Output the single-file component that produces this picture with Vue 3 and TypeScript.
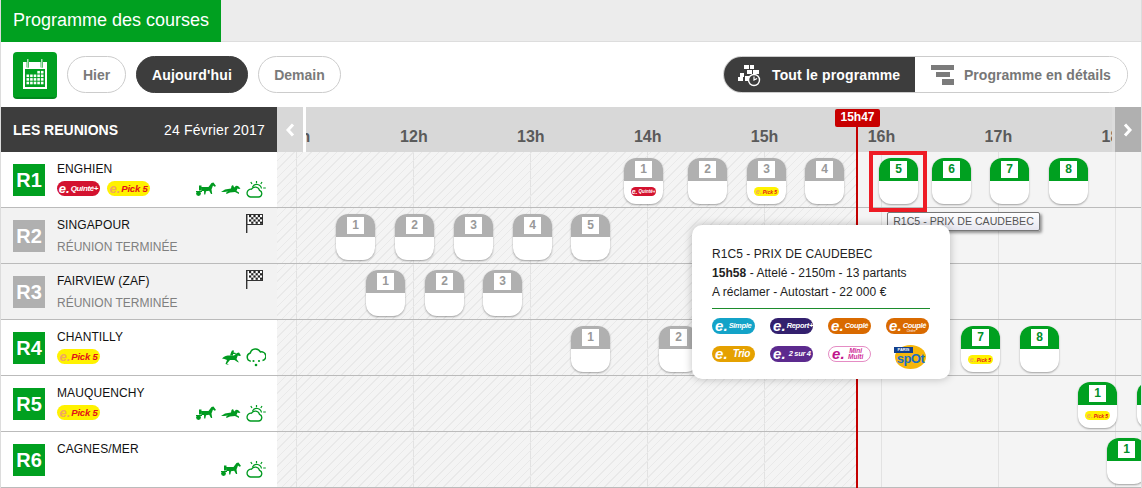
<script setup lang="ts">
interface Race { n: number; x: number; on: boolean; mini?: 'quinte' | 'pick' }
interface Meeting {
  code: string; name: string; done: boolean; pills: ('quinte' | 'pick')[];
  icons: string[]; races: Race[];
}
const hours = [11, 12, 13, 14, 15, 16, 17, 18].map((h, i) => ({ label: h + 'h', x: 20 + i * 116.9 }))
const ox = 277
const meetings: Meeting[] = [
  { code: 'R1', name: 'ENGHIEN', done: false, pills: ['quinte', 'pick'], icons: ['trot', 'small', 'sun'], races: [
    { n: 1, x: 624, on: false, mini: 'quinte' }, { n: 2, x: 688, on: false }, { n: 3, x: 747, on: false, mini: 'pick' },
    { n: 4, x: 805, on: false }, { n: 5, x: 879, on: true }, { n: 6, x: 932, on: true }, { n: 7, x: 990, on: true }, { n: 8, x: 1049, on: true } ] },
  { code: 'R2', name: 'SINGAPOUR', done: true, pills: [], icons: [], races: [
    { n: 1, x: 336, on: false }, { n: 2, x: 395, on: false }, { n: 3, x: 454, on: false }, { n: 4, x: 513, on: false }, { n: 5, x: 571, on: false } ] },
  { code: 'R3', name: 'FAIRVIEW (ZAF)', done: true, pills: [], icons: [], races: [
    { n: 1, x: 366, on: false }, { n: 2, x: 425, on: false }, { n: 3, x: 483, on: false } ] },
  { code: 'R4', name: 'CHANTILLY', done: false, pills: ['pick'], icons: ['gallop', 'rain'], races: [
    { n: 1, x: 571, on: false }, { n: 2, x: 659, on: false }, { n: 7, x: 961, on: true, mini: 'pick' }, { n: 8, x: 1020, on: true } ] },
  { code: 'R5', name: 'MAUQUENCHY', done: false, pills: ['pick'], icons: ['trot', 'small', 'sun'], races: [
    { n: 1, x: 1078, on: true, mini: 'pick' }, { n: 2, x: 1137, on: true } ] },
  { code: 'R6', name: 'CAGNES/MER', done: false, pills: [], icons: ['trot', 'sun'], races: [
    { n: 1, x: 1107, on: true } ] }
]
const bets = [
  { c: 'simple', t: 'Simple', s: '' }, { c: 'report', t: 'Report+', s: '' }, { c: 'couple', t: 'Couplé', s: '' }, { c: 'couple', t: 'Couplé', s: 'Ordre' },
  { c: 'trio', t: 'Trio', s: '' }, { c: 'sur4', t: '2 sur 4', s: '' }, { c: 'multi', t: 'Mini Multi', s: '' }
]
const flagCells = [0, 1, 2, 3].flatMap(r => [0, 1, 2, 3, 4, 5].filter(c => (c + r) % 2 === 0).map(c => ({ x: 4 + c * 2.2, y: 1 + r * 2.2 })))
const calCells = [
  ...[3, 4].map(c => ({ c, r: -1 })),
  ...[0, 1, 2].flatMap(r => [0, 1, 2, 3, 4].map(c => ({ c, r })))
].map(p => ({ x: 6.5 + p.c * 3.6, y: 16.5 + p.r * 3.6 }))
</script>

<template>
  <div class="page">
    <svg class="defs" width="0" height="0" aria-hidden="true">
      <symbol id="i-trot" viewBox="0 0 20 16">
        <path d="M5 5.5 12.5 5.5 15.5 1.5 17.5 1 20 4.5 18.6 5.2 17 4 15.5 8 16.2 12.5 15 12.5 13.2 9.2 10 9.8 9.3 13 8.2 13 8 9.6 5.4 9.5Z" fill="currentColor" />
        <path d="M0 10h6" stroke="currentColor" stroke-width="1" />
        <circle cx="2.5" cy="12" r="2.4" fill="currentColor" />
        <rect x="3" y="4" width="2.5" height="5" fill="currentColor" />
      </symbol>
      <symbol id="i-small" viewBox="0 0 20 16">
        <path d="M0 10.5 4 8 10 7 10.5 4.5 12 3.5 13.2 6 15 4.2 17 4.6 19.5 7 18 7.5 16.5 7 15.5 9.5 18 11 18 12.5 14 10.5 9 11 5.5 12.5 5 11.2 7 10 3 10.5Z" fill="currentColor" />
      </symbol>
      <symbol id="i-gallop" viewBox="0 0 20 16">
        <path d="M1 9C3 6.5 6 6 9 6L13 6 16 3.5 18 3 20 6 18.5 6.5 16.8 6 15.5 9.5 18 13 16.5 12.5 13.5 10.5 9 10.5 6 14 8 15.5 4.5 14.5 6 10.5 3.5 9.5Z" fill="currentColor" />
        <path d="M9 6 10 3 11 1 13 1 12.5 3 15 3.5 14.5 4.5 12 4.5 12 6Z" fill="currentColor" />
      </symbol>
      <symbol id="i-sun" viewBox="0 0 20 17">
        <path d="M4.5 16h8a3.4 3.4 0 0 0 1-6.6 4.4 4.4 0 0 0-8-1.2A3.9 3.9 0 0 0 4.5 16Z" fill="none" stroke="currentColor" stroke-width="1.3" />
        <path d="M6.5 6A4.8 4.8 0 0 1 15.5 7.5" fill="none" stroke="currentColor" stroke-width="1.2" />
        <path d="M10.5 0v2.2M4.8 1 6 3M16 1 14.8 3M17.2 7h2.6" stroke="currentColor" stroke-width="1.2" fill="none" />
      </symbol>
      <symbol id="i-rain" viewBox="0 0 20 20">
        <path d="M4.8 14.2A4.2 4.2 0 0 1 4.3 6 5.4 5.4 0 0 1 14.4 5 4.3 4.3 0 0 1 16.5 13.6" fill="none" stroke="currentColor" stroke-width="1.5" />
        <circle cx="7.5" cy="14" r="1.1" fill="currentColor" /><circle cx="13" cy="14" r="1.1" fill="currentColor" /><circle cx="10" cy="18" r="1.3" fill="currentColor" />
      </symbol>
    </svg>

    <header class="tabbar"><h1 class="tab">Programme des courses</h1></header>

    <nav class="toolbar">
      <span class="cal">
        <svg width="30" height="33" viewBox="0 0 30 33">
          <rect x="3" y="4" width="24" height="27" fill="#fff" />
          <rect x="5" y="11" width="20" height="18" fill="#00a020" />
          <rect x="6.6" y="1" width="2.4" height="9" rx="1.2" fill="#00a020" /><rect x="20.6" y="1" width="2.4" height="9" rx="1.2" fill="#00a020" />
          <rect x="7.2" y="1" width="1.2" height="9" fill="#d8f2dc" /><rect x="21.2" y="1" width="1.2" height="9" fill="#d8f2dc" />
          <rect v-for="(c, i) in calCells" :key="i" :x="c.x" :y="c.y" width="2.6" height="2.6" fill="#fff" />
        </svg>
      </span>
      <button class="btn hier">Hier</button>
      <button class="btn auj active">Aujourd'hui</button>
      <button class="btn dem">Demain</button>
      <div class="toggle">
        <button class="seg seg-on">
          <svg width="26" height="24" viewBox="0 0 26 24" class="seg-ic">
            <g fill="#fff">
              <rect x="7" y="2" width="5" height="4" /><rect x="13" y="2" width="4" height="4" /><rect x="10" y="7" width="5" height="4" />
              <rect x="16" y="7" width="6" height="4" /><rect x="3" y="10" width="4" height="4" /><rect x="1" y="14" width="5" height="4" /><rect x="8" y="13" width="5" height="5" />
            </g>
            <circle cx="17" cy="17" r="5.5" fill="#3d3d3d" stroke="#fff" stroke-width="1.4" />
            <path d="M17 13.5V17L20 15.5" stroke="#fff" fill="none" stroke-width="1.2" />
          </svg>
          Tout le programme
        </button>
        <button class="seg seg-off">
          <svg width="24" height="21" viewBox="0 0 24 21" class="seg-ic2">
            <rect x="0" y="0" width="23" height="5" fill="#7b7b7b" /><rect x="5" y="7" width="14" height="5" fill="#7b7b7b" /><rect x="11" y="14" width="12" height="6" fill="#7b7b7b" />
          </svg>
          Programme en détails
        </button>
      </div>
    </nav>

    <section class="head">
      <div class="head-left"><strong>LES REUNIONS</strong><span class="date">24 Février 2017</span></div>
      <div class="ruler">
        <span v-for="h in hours" :key="h.label" class="hour" :style="{ left: h.x + 'px' }">{{ h.label }}</span>
        <button class="arrow arrow-l" aria-label="Précédent"><svg width="10" height="14" viewBox="0 0 10 14"><path d="M8 1.5 3 7l5 5.5" fill="none" stroke="#fff" stroke-width="3" /></svg></button>
        <button class="arrow arrow-r" aria-label="Suivant"><svg width="10" height="14" viewBox="0 0 10 14"><path d="M2 1.5 7 7l-5 5.5" fill="none" stroke="#fff" stroke-width="3" /></svg></button>
      </div>
    </section>

    <section v-for="m in meetings" :key="m.code" class="row">
      <div class="info" :class="{ done: m.done }">
        <span class="code">{{ m.code }}</span>
        <div class="meta">
          <div class="name">{{ m.name }}</div>
          <div v-if="m.done" class="ended">RÉUNION TERMINÉE</div>
          <div v-else class="pills">
            <span v-for="p in m.pills" :key="p" class="pill" :class="p"><i>e.</i><b>{{ p === 'quinte' ? 'Quinté+' : 'Pick 5' }}</b></span>
          </div>
        </div>
        <svg v-if="m.done" class="flag" width="18" height="19" viewBox="0 0 18 19">
          <rect x="1" y="0" width="1.4" height="19" fill="#333" />
          <rect x="2" y="0.5" width="15.5" height="10" fill="#fff" stroke="#333" stroke-width="1" />
          <rect v-for="(c, i) in flagCells" :key="i" :x="c.x" :y="c.y" width="2.2" height="2.2" fill="#222" />
        </svg>
        <div v-else class="icons">
          <svg v-for="ic in m.icons" :key="ic" class="ic" :class="'ic-' + ic" width="20" :height="ic === 'rain' ? 20 : 17"><use :href="'#i-' + ic" /></svg>
        </div>
      </div>
      <div class="track">
        <article v-for="r in m.races" :key="r.n" class="tile" :class="{ on: r.on }" :style="{ left: r.x - ox + 'px' }">
          <div class="tile-top"><span class="num">{{ r.n }}</span></div>
          <span v-if="r.mini" class="pill mini" :class="r.mini"><i>e.</i><b>{{ r.mini === 'quinte' ? 'Quinté+' : 'Pick 5' }}</b></span>
        </article>
      </div>
    </section>

    <div class="now-line"></div>
    <div class="now-flag">15h47</div>
    <div class="selected"></div>
    <div class="tooltip">R1C5 - PRIX DE CAUDEBEC</div>

    <aside class="popup">
      <p>R1C5 - PRIX DE CAUDEBEC</p>
      <p><b>15h58</b> - Attelé - 2150m - 13 partants</p>
      <p>A réclamer - Autostart - 22 000 €</p>
      <hr />
      <div class="bets">
        <span v-for="(b, i) in bets" :key="i" class="bet" :class="b.c"><i>e.</i><b>{{ b.t }}<small v-if="b.s">{{ b.s }}</small></b></span>
        <span class="spot"><small>PARIS</small>spOt</span>
      </div>
    </aside>
  </div>
</template>

<style scoped>
.page { position: relative; width: 1142px; height: 488px; overflow: hidden; box-sizing: border-box; border-left: 1px solid #dcdcdc; border-right: 1px solid #dcdcdc; background: #fff; font-family: "Liberation Sans", Arial, sans-serif; color: #111; }
.defs { position: absolute; }
.tabbar { height: 41px; background: #ececec; border-bottom: 1px solid #ddd; }
.tab { display: inline-block; margin: 0; height: 42px; width: 220px; box-sizing: border-box; padding: 0 12px; background: #00a020; color: #fff; font-size: 18px; font-weight: 400; line-height: 41px; white-space: nowrap; }
.toolbar { height: 65px; display: flex; align-items: center; padding: 0 13px 0 12px; }
.cal { width: 44px; height: 47px; box-sizing: border-box; margin-top: 1px; margin-right: 10px; border-radius: 4px; background: #00a020; border-bottom: 2px solid #008a1c; display: flex; align-items: center; justify-content: center; }
.btn { height: 37px; padding: 0; margin-right: 10px; border: 1px solid #ccc; border-radius: 19px; background: #fff; color: #7a7a7a; font: bold 14px "Liberation Sans", Arial, sans-serif; }
.hier { width: 59px; }
.auj { width: 112px; letter-spacing: 0.2px; }
.dem { width: 83px; }
.btn.active { background: #3d3d3d; border-color: #3d3d3d; color: #fff; }
.toggle { margin-left: auto; width: 405px; height: 37px; display: flex; border: 1px solid #ccc; box-sizing: border-box; border-radius: 19px; overflow: hidden; }
.seg { flex: 1; padding: 0; border: 0; background: #fff; color: #777; font: bold 14px "Liberation Sans", Arial, sans-serif; display: flex; align-items: center; gap: 9px; padding-left: 16px; }
.seg-off { letter-spacing: 0.03px; }
.seg-on { flex: 0 0 192px; box-sizing: border-box; background: #3d3d3d; color: #fff; padding-left: 14px; gap: 9px; margin: -1px 0 -1px -1px; height: 37px; letter-spacing: 0.15px; }
.seg-ic2 { margin-top: 2px; }
.head { height: 45px; display: flex; }
.head-left { width: 276px; box-sizing: border-box; padding: 0 12px; background: #3d3d3d; color: #fff; display: flex; align-items: center; justify-content: space-between; font-size: 14px; }
.date { letter-spacing: 0.2px; }
.ruler { position: relative; flex: 1; background: #d8d8d8; overflow: hidden; }
.hour { position: absolute; top: 21px; transform: translateX(-50%); font-size: 16px; font-weight: bold; color: #5a5a5a; line-height: 18px; }
.arrow { position: absolute; top: 0; height: 45px; border: 0; padding: 0; display: flex; align-items: center; justify-content: center; }
.arrow-l { left: 0; width: 26px; background: #d8d8d8; box-shadow: 3px 0 0 #fff; }
.arrow-r { right: 0; width: 26px; background: #b0b0b0; box-shadow: -3px 0 0 #dcdcdc; }
.row { height: 56px; box-sizing: border-box; display: flex; border-bottom: 1px solid #bbb; }
.info { width: 276px; position: relative; box-sizing: border-box; display: flex; padding: 12px 12px 0; background: #fff; }
.info.done { background: #f2f2f2; }
.code { width: 32px; height: 32px; flex: none; background: #00a020; color: #fff; font-size: 20px; font-weight: bold; line-height: 32px; text-align: center; }
.done .code { background: #b0b0b0; }
.meta { margin-left: 12px; margin-top: -3px; }
.name { font-size: 12px; line-height: 16px; letter-spacing: 0.1px; }
.ended { margin-top: 6px; font-size: 12px; line-height: 16px; color: #808080; }
.pills { display: flex; gap: 7px; margin-top: 4px; }
.pill { width: 43px; height: 15px; box-sizing: border-box; border-radius: 8px; display: flex; align-items: center; justify-content: center; gap: 1px; white-space: nowrap; font-style: italic; }
.pill i { font: italic bold 13px/13px "Liberation Sans", sans-serif; margin-top: -1px; }
.pill b { font-size: 8px; line-height: 10px; letter-spacing: -0.35px; }
.pill.quinte { background: #d3122f; color: #fff; }
.pill.pick { background: #fff200; color: #e2101a; }
.pill.pick i { color: #f0a860; }
.pill.pick b { font-size: 9.5px; letter-spacing: -0.2px; }
.pill.mini { position: absolute; left: 7px; top: 29px; width: 25px; height: 9px; }
.pill.mini i { font-size: 7px; line-height: 8px; margin-top: 0; }
.pill.mini b { font-size: 4.5px; line-height: 8px; letter-spacing: 0; }
.pill.pick.mini b { font-size: 5px; }
.icons { position: absolute; right: 11px; top: 29px; display: flex; gap: 5px; color: #009a20; }
.ic { display: block; }
.ic-rain { margin-top: -2px; }
.flag { position: absolute; left: 244px; top: 6px; }
.track { position: relative; flex: 1; background-color: #f4f4f4; background-image: repeating-linear-gradient(90deg, #e2e2e2 0 1px, transparent 1px 117px); background-position: 19px 0; background-repeat: repeat-x; background-size: 117px 100%; }
.track::before { content: ""; position: absolute; inset: 0 auto 0 0; width: 580px; background: repeating-linear-gradient(135deg, #e9e9e9 0 1px, transparent 1px 6px); }
.tile { position: absolute; top: 6px; width: 39px; height: 46px; background: #fff; border-radius: 12px; overflow: hidden; box-shadow: 0 1px 2px rgba(0, 0, 0, .35); }
.tile-top { height: 23px; background: #b0b0b0; display: flex; justify-content: center; padding-top: 3px; box-sizing: border-box; }
.tile.on .tile-top { background: #00a020; }
.num { width: 17px; height: 17px; background: #fff; color: #999; font-size: 12px; font-weight: bold; line-height: 17px; text-align: center; }
.on .num { color: #00902a; }
.now-line { position: absolute; left: 855px; top: 126px; bottom: 0; width: 2px; background: #c40000; }
.now-flag { position: absolute; left: 834px; top: 109px; width: 45px; height: 18px; border-radius: 2px; background: #c80000; color: #fff; font-size: 12px; font-weight: bold; line-height: 17px; text-align: center; }
.selected { position: absolute; left: 868px; top: 151px; width: 58px; height: 61px; box-sizing: border-box; border: 4px solid #ee1c25; }
.tooltip { position: absolute; left: 886px; top: 212px; width: 153px; height: 19px; box-sizing: border-box; border: 1px solid #777; border-radius: 2px; background: linear-gradient(#fff, #e6e6f0); color: #555; font-size: 10.6px; line-height: 16px; text-align: center; white-space: nowrap; box-shadow: 2px 2px 3px rgba(0, 0, 0, .4); }
.popup { position: absolute; left: 691px; top: 225px; width: 258px; height: 154px; box-sizing: border-box; padding: 20px; background: #fff; border-radius: 10px; box-shadow: 0 0 8px rgba(0, 0, 0, .25); font-size: 12px; color: #222; letter-spacing: 0.05px; }
.popup p { margin: 0; line-height: 19px; }
.popup hr { margin: 6px 0 9px; height: 1px; border: 0; background: #1c8c2c; }
.bets { display: grid; grid-template-columns: repeat(4, 43px); column-gap: 15px; row-gap: 12px; }
.bet { height: 16px; padding-left: 3px; box-sizing: border-box; border-radius: 8px; color: #fff; display: flex; align-items: center; gap: 1px; white-space: nowrap; font-style: italic; }
.bet i { font: italic bold 15px/14px "Liberation Sans", sans-serif; margin-top: -1px; }
.bet b { font-size: 7.5px; line-height: 10px; letter-spacing: -0.3px; position: relative; }
.bet small { position: absolute; left: 4px; top: 8px; font-size: 3.5px; line-height: 4px; font-weight: normal; letter-spacing: 0; }
.simple { background: #13a3c8; }
.report { background: #33206e; }
.couple { background: #d96a00; }
.trio { background: #e5a100; }
.trio b { font-size: 10px; margin-left: 4px; }
.sur4 { background: #5c2a8e; }
.sur4 b { margin-left: 2px; }
.multi { background: #fff; border: 1px solid #e58cc4; color: #c0148c; padding-left: 3px; }
.multi b { font-size: 6.5px; white-space: normal; line-height: 6.5px; color: #d02a96; width: 20px; text-align: center; letter-spacing: 0; }
.spot { position: relative; justify-self: center; margin-left: 6px; margin-top: -1px; width: 31px; height: 24px; border-radius: 50%; background: #f6b60a; color: #1b6fc0; font-size: 13px; font-weight: bold; line-height: 28px; text-align: center; letter-spacing: -0.5px; }
.spot small { position: absolute; left: -1px; top: 2px; width: 19px; height: 6px; background: #123f8c; color: #fff; font-size: 4px; line-height: 6px; letter-spacing: 0; }
</style>

<style>
html, body { margin: 0; overflow: hidden; }
</style>
